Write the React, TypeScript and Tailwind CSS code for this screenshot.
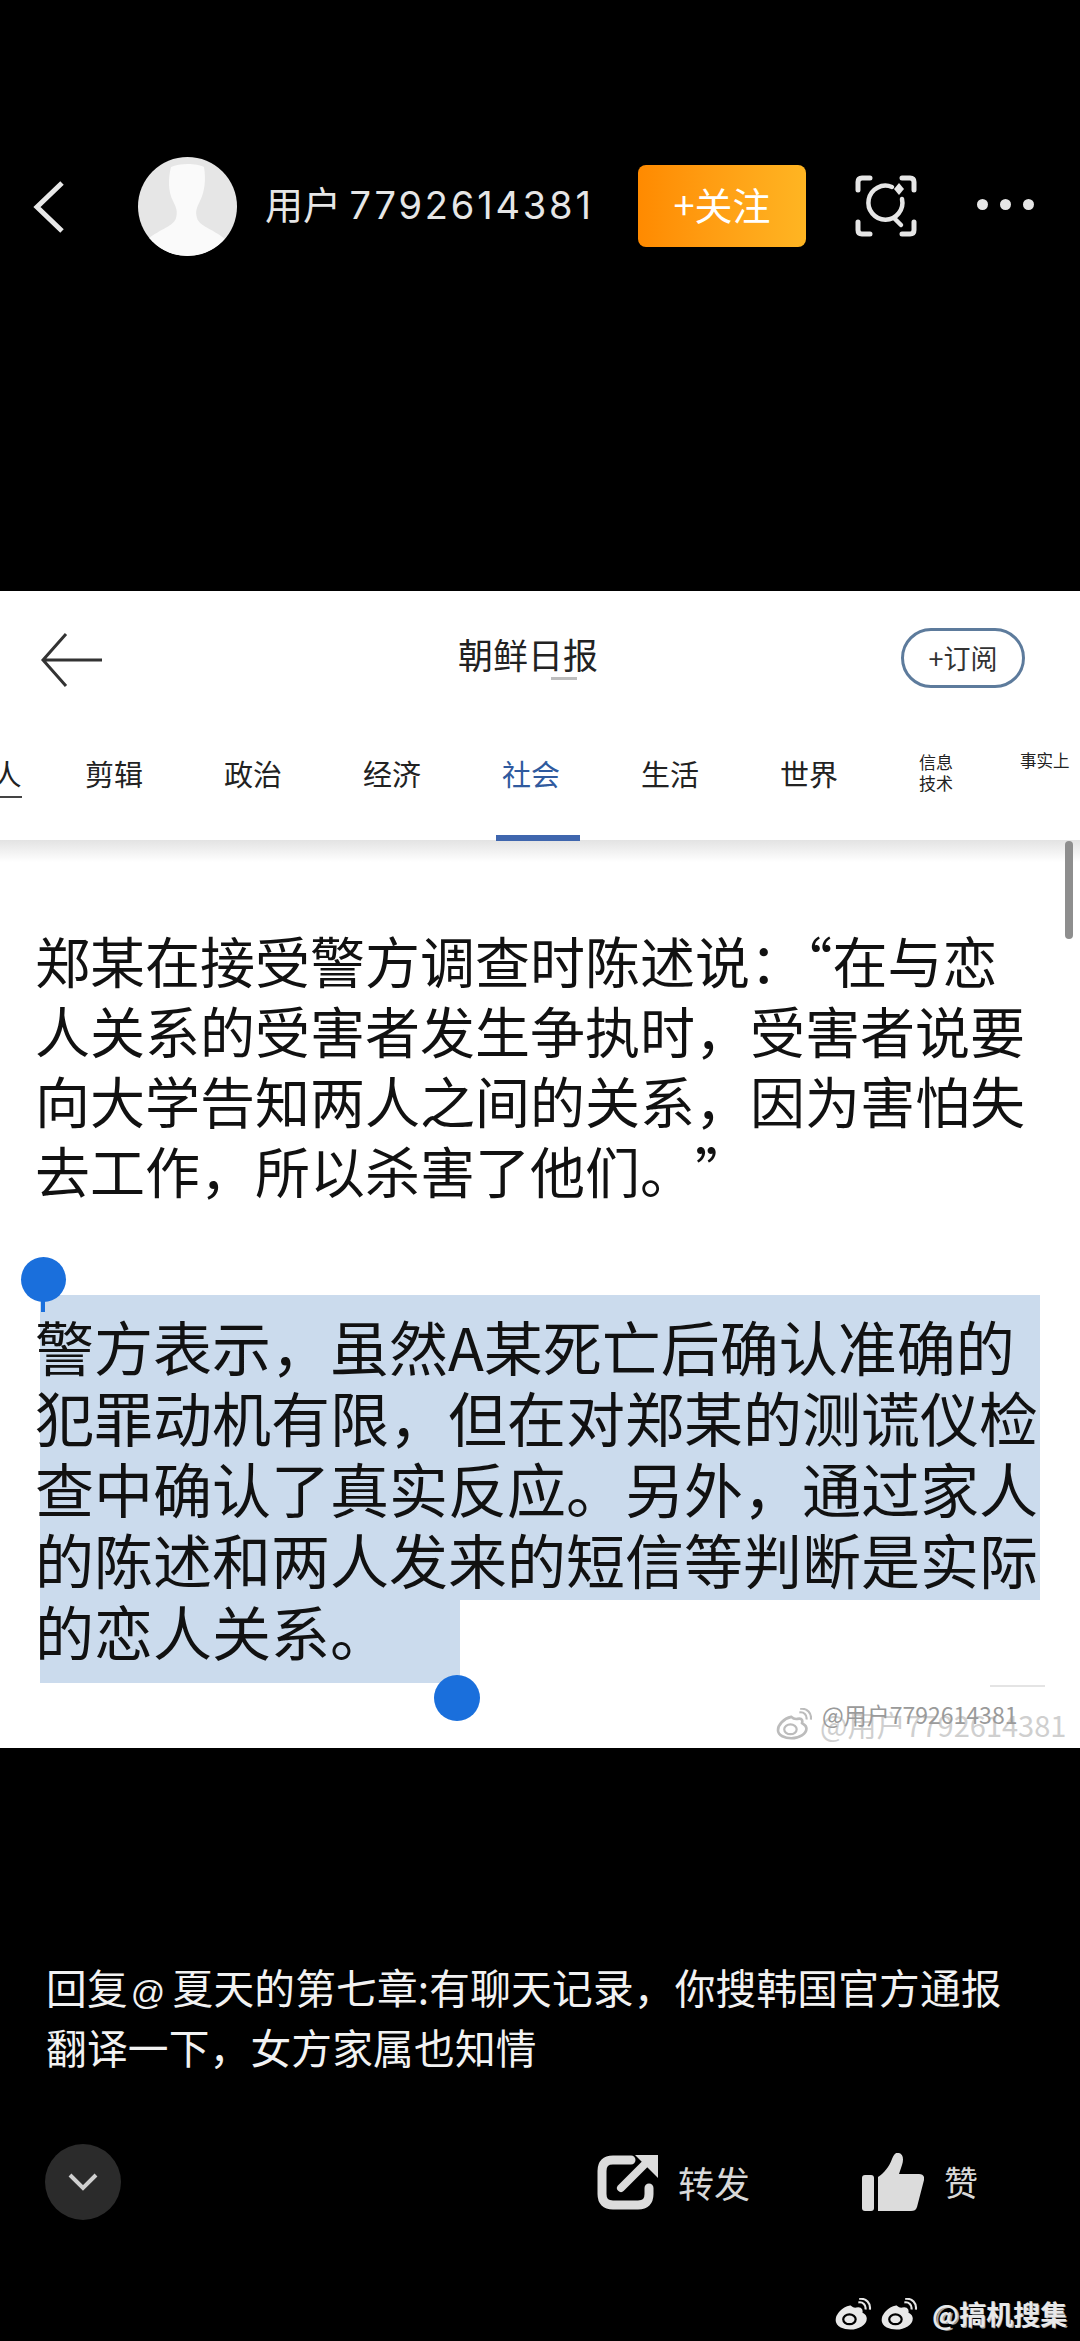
const cjk = "font-['Noto_Sans_CJK_SC','Liberation_Sans',sans-serif]";

const tabs = ['剪辑', '政治', '经济', '社会', '生活', '世界'];
const firstPara = [
  '郑某在接受警方调查时陈述说：“在与恋',
  '人关系的受害者发生争执时，受害者说要',
  '向大学告知两人之间的关系，因为害怕失',
];
const selected = [
  '警方表示，虽然A某死亡后确认准确的',
  '犯罪动机有限，但在对郑某的测谎仪检',
  '查中确认了真实反应。另外，通过家人',
  '的陈述和两人发来的短信等判断是实际',
];

function WeiboMark({ className, solid }: { className: string; solid?: boolean }) {
  return (
    <svg viewBox="0 0 40 36" className={className} fill="none" stroke="currentColor">
      <path
        d="M17 10C8 12 2 19 2 25c0 6 8 9 15 9 9 0 17-5 17-11 0-4-4-5-5-6 1-3 0-5-3-5-3 0-5 2-9-2Z"
        strokeWidth="3"
        fill={solid ? 'currentColor' : 'none'}
      />
      <ellipse cx="16" cy="24" rx="7" ry="5.5" strokeWidth="2.5" stroke={solid ? '#000' : 'currentColor'} />
      <path d="M26 5c5-1 9 3 8 8M27 1c8-1 13 5 12 12" strokeWidth="2.4" />
    </svg>
  );
}

export default function App() {
  return (
    <div className={`relative flex h-[2341px] w-[1080px] flex-col overflow-hidden bg-black ${cjk}`}>
      {/* top bar */}
      <div className="flex h-[591px] shrink-0 items-start pt-[157px]">
        <svg viewBox="0 0 34 52" className="ml-[32px] mt-[24px] h-[52px] w-[34px]" fill="none" stroke="#e8e8e8" strokeWidth="5">
          <path d="M30 2 5 26l25 24" />
        </svg>
        <div className="relative ml-[72px] h-[99px] w-[99px] shrink-0 overflow-hidden rounded-full bg-[#e6e6e6]">
          <svg viewBox="0 0 99 99" className="h-full w-full">
            <path d="M33 10c8-4 26-4 33 0 2 12 1 24-4 34-3 6-5 10-3 17 2 8 16 11 28 21-10 11-24 17-38 17S20 93 10 82c12-10 26-13 28-21 2-7 0-11-3-17-5-10-5-22-2-34Z" fill="#fafafa" />
          </svg>
        </div>
        <span className="ml-[28px] mt-[21px] whitespace-nowrap text-[38px] leading-[50px] text-[#e6e6e6]">
          用户 <span className="font-['Inter',sans-serif] text-[38px] tracking-[2.8px]">7792614381</span>
        </span>
        <div className="absolute left-[638px] top-[165px] flex h-[82px] w-[168px] items-center justify-center rounded-[8px] bg-gradient-to-r from-[#ff8a00] to-[#ffb522] pb-[5px] text-[38px] text-white">
          +关注
        </div>
        <svg viewBox="0 0 62 62" className="absolute left-[855px] top-[175px] h-[62px] w-[62px]" fill="none" stroke="#e6e6e6" strokeLinecap="round">
          <path d="M3 15V7q0-4 4-4h8M47 3h8q4 0 4 4v8M3 47v8q0 4 4 4h8M59 47v8q0 4-4 4h-8" strokeWidth="5" />
          <path d="M37 12a17 17 0 1 0 10 12M40 44l6 6" strokeWidth="4.5" />
          <path d="M44 8l5 6-5 6-5-6Z" fill="#e6e6e6" stroke="none" />
        </svg>
        <div className="absolute left-[977px] top-[199px] flex gap-[12px]">
          <span className="h-[11px] w-[11px] rounded-full bg-[#e6e6e6]" />
          <span className="h-[11px] w-[11px] rounded-full bg-[#e6e6e6]" />
          <span className="h-[11px] w-[11px] rounded-full bg-[#e6e6e6]" />
        </div>
      </div>

      {/* screenshot panel */}
      <div className="relative flex h-[1157px] shrink-0 flex-col bg-white text-[#111]">
        <div className="flex h-[136px] shrink-0 items-start">
          <svg viewBox="0 0 62 54" className="ml-[40px] mt-[42px] h-[54px] w-[62px]" fill="none" stroke="#333" strokeWidth="3">
            <path d="M26 1 3 27l23 26M3 27h59" />
          </svg>
          <span className="relative ml-[356px] mt-[40px] text-[35px] leading-[46px] text-[#222]">
            朝鲜日报
            <span className="absolute left-[93px] top-[46px] h-[3px] w-[26px] bg-[#bdbdbd]" />
          </span>
          <span className="ml-[303px] mt-[37px] flex h-[60px] w-[124px] items-center justify-center rounded-[30px] border-[3px] border-[#5d7b9c] text-[27px] text-[#333]">
            +订阅
          </span>
        </div>
        <div className="flex h-[113px] shrink-0 items-start text-[29px] text-[#222]">
          <span className="ml-[-8px] mt-[23px] w-[30px] border-b-2 border-[#444] text-center leading-[46px]">人</span>
          <div className="ml-[62px] flex gap-[79px] pt-[23px] leading-[46px]">
            {tabs.map((tab) => (
              <span key={tab} className={`relative w-[60px] text-center ${tab === '社会' ? 'text-[#2f5a9e]' : ''}`}>
                {tab}
                {tab === '社会' && <span className="absolute left-[-5px] top-[85px] h-[6px] w-[84px] bg-[#3f66ae]" />}
              </span>
            ))}
          </div>
          <span className="ml-[79px] mt-[24px] w-[36px] text-center text-[17px] leading-[21px]">信息 技术</span>
          <span className="ml-[66px] mt-[21px] whitespace-nowrap text-[16.5px] leading-[24px]">事实上</span>
        </div>
        <div className="h-[22px] shrink-0 bg-gradient-to-b from-[#e3e3e3] to-white" />
        <div className="absolute left-[1065px] top-[250px] h-[98px] w-[8px] rounded-full bg-[#8e8e8e]" />

        <div className="pl-[35px] pt-[62px] text-[55px] leading-[70px]">
          {firstPara.map((line) => (
            <div key={line} className="whitespace-nowrap">{line}</div>
          ))}
          <div className="whitespace-nowrap [text-spacing-trim:space-all]">去工作，所以杀害了他们。”</div>
        </div>

        <div className="ml-[40px] mt-[91px] w-[1000px] bg-[#cbdbed] pb-[6px] pt-[15px] text-[59px] leading-[71px]">
          {selected.map((line) => (
            <div key={line} className="ml-[-5px] whitespace-nowrap">{line}</div>
          ))}
        </div>
        <div className="ml-[40px] flex h-[83px] w-[420px] flex-col bg-[#cbdbed] text-[59px] leading-[71px]">
          <div className="ml-[-5px] mt-[-5px] whitespace-nowrap">的恋人关系。</div>
        </div>

        {/* selection handles */}
        <div className="absolute left-[21px] top-[666px] h-[45px] w-[45px] rounded-full bg-[#1a6fdc]" />
        <div className="absolute left-[41px] top-[706px] h-[15px] w-[4px] bg-[#1a6fdc]" />
        <div className="absolute left-[434px] top-[1084px] h-[46px] w-[46px] rounded-full bg-[#1a6fdc]" />
        <div className="absolute left-[990px] top-[1094px] h-[2px] w-[55px] bg-[#e4e4e4]" />

        {/* watermark, doubled as in the source */}
        <div className="absolute left-[776px] top-[1113px] flex items-center text-[29px] leading-[40px] text-[#cfcfcf]">
          <WeiboMark className="h-[32px] w-[36px] text-[#bcbcbc]" />
          <span className="ml-[8px] whitespace-nowrap">@用户7792614381</span>
        </div>
        <div className="absolute left-[822px] top-[1108px] whitespace-nowrap text-[23px] leading-[30px] text-[#9a9a9a]">
          @用户7792614381
        </div>
      </div>

      {/* caption + actions */}
      <div className="flex-1">
        <div className="pl-[46px] pt-[209px] text-[40.7px] leading-[60px] tracking-[0.2px] text-[#f2f2f2]">
          <div className="whitespace-nowrap">
            回复<span className="ml-[3px] mr-[7px] font-['Liberation_Sans',sans-serif] text-[34px] leading-none">@</span>夏天的第七章:有聊天记录，你搜韩国官方通报
          </div>
          <div className="whitespace-nowrap">翻译一下，女方家属也知情</div>
        </div>
        <div className="mt-[67px] flex items-center pl-[45px]">
          <div className="flex h-[76px] w-[76px] items-center justify-center rounded-full bg-[#2b2b2b]">
            <svg viewBox="0 0 32 20" className="h-[20px] w-[32px]" fill="none" stroke="#d0d0d0" strokeWidth="4">
              <path d="M3 3l13 13L29 3" />
            </svg>
          </div>
          <svg viewBox="0 0 62 56" className="ml-[476px] h-[56px] w-[62px]" fill="none">
            <path d="M34 6H16Q5 6 5 17v23q0 11 11 11h25q11 0 11-11v-6" stroke="#dcdcdc" strokeWidth="9" strokeLinecap="round" />
            <path d="M24 34 50 8" stroke="#dcdcdc" strokeWidth="8" strokeLinecap="round" />
            <path d="M38 1h23v23Z" fill="#dcdcdc" />
          </svg>
          <span className="ml-[19px] text-[36px] leading-[48px] text-[#d8d8d8]">转发</span>
          <svg viewBox="0 0 62 58" className="ml-[112px] h-[58px] w-[62px]" fill="#dcdcdc">
            <path d="M0 25q0-3 3-3h6q3 0 3 3v30q0 3-3 3H3q-3 0-3-3Z" />
            <path d="M16 24c6-4 11-10 14-18 2-5 4-7 7-6 4 1 5 6 3 12l-3 9h20c4 0 6 3 5 6l-7 27c-1 3-3 4-6 4H16Z" />
          </svg>
          <span className="ml-[20px] text-[34px] leading-[48px] text-[#d8d8d8]">赞</span>
        </div>
      </div>

      {/* doubled watermark */}
      <div className="absolute left-[833px] top-[2298px] flex items-center text-[#e8e8e8]">
        <WeiboMark solid className="h-[32px] w-[40px]" />
        <WeiboMark solid className="ml-[5px] h-[32px] w-[42px]" />
        <span className="relative ml-[12px] whitespace-nowrap text-[27px] font-bold leading-[32px]">
          @搞机搜集
          <span className="absolute left-[3px] top-[1px] font-normal opacity-70">@搞机搜集</span>
        </span>
      </div>
    </div>
  );
}
